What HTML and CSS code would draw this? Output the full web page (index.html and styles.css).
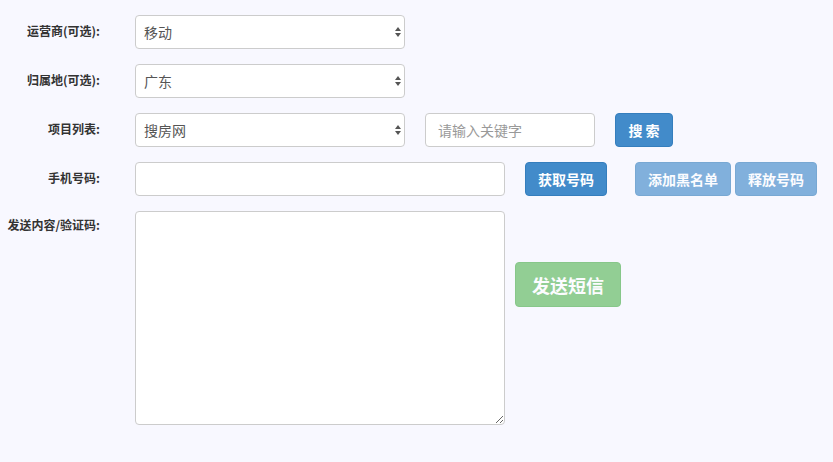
FILE: index.html
```html
<!DOCTYPE html>
<html lang="zh-CN">
<head>
    <meta charset="UTF-8">
    <title>短信验证码</title>
    <link rel="stylesheet" href="styles.css">
</head>
<body>
    <form class="sms-form">
        <div class="row">
            <label class="row-label">运营商(可选):</label>
            <span class="select-wrap">
                <select class="field select">
                    <option>移动</option>
                    <option>联通</option>
                    <option>电信</option>
                </select>
            </span>
        </div>

        <div class="row">
            <label class="row-label">归属地(可选):</label>
            <span class="select-wrap">
                <select class="field select">
                    <option>广东</option>
                </select>
            </span>
        </div>

        <div class="row">
            <label class="row-label">项目列表:</label>
            <span class="select-wrap">
                <select class="field select">
                    <option>搜房网</option>
                </select>
            </span>
            <input type="text" class="field keyword" placeholder="请输入关键字">
            <button type="button" class="btn btn-primary btn-search">搜 索</button>
        </div>

        <div class="row">
            <label class="row-label">手机号码:</label>
            <input type="text" class="field phone">
            <button type="button" class="btn btn-primary btn-get">获取号码</button>
            <div class="btn-pair">
                <button type="button" class="btn btn-primary btn-off">添加黑名单</button>
                <button type="button" class="btn btn-primary btn-off">释放号码</button>
            </div>
        </div>

        <div class="row row-tall">
            <label class="row-label">发送内容/验证码:</label>
            <textarea class="field message"></textarea>
            <button type="button" class="btn btn-send">发送短信</button>
        </div>
    </form>
</body>
</html>
```

FILE: styles.css
```css
body {
    margin: 0;
    background-color: #f8f8ff;
    font-family: "Noto Sans CJK SC", "Noto Sans", sans-serif;
    color: #333;
}
.sms-form {
    padding-top: 15px;
}
.row {
    display: flex;
    align-items: center;
    height: 34px;
    margin-bottom: 15px;
}
.row-label {
    width: 100px;
    margin-right: 35px;
    padding-bottom: 3px;
    text-align: right;
    font-size: 12px;
    font-weight: bold;
    color: #333;
}
.field {
    box-sizing: border-box;
    height: 34px;
    padding: 6px 12px;
    font-family: inherit;
    font-size: 14px;
    color: #555;
    background-color: #fff;
    border: 1px solid #ccc;
    border-radius: 4px;
    outline: none;
}
.field::placeholder {
    color: #999;
}
.select-wrap {
    position: relative;
    display: inline-block;
}
.select-wrap::before,
.select-wrap::after {
    content: "";
    position: absolute;
    right: 4px;
    width: 0;
    height: 0;
    border-left: 3px solid transparent;
    border-right: 3px solid transparent;
    pointer-events: none;
}
.select-wrap::before {
    top: 12px;
    border-bottom: 4px solid #555;
}
.select-wrap::after {
    top: 18px;
    border-top: 4px solid #555;
}
.select {
    width: 270px;
    padding-left: 8px;
    -webkit-appearance: none;
    appearance: none;
}
.keyword {
    width: 170px;
    margin-left: 20px;
}
.phone {
    width: 370px;
}
.btn {
    box-sizing: border-box;
    height: 34px;
    padding: 0 6px;
    font-family: inherit;
    font-size: 14px;
    font-weight: bold;
    color: #fff;
    border: 1px solid transparent;
    border-radius: 4px;
    cursor: pointer;
}
.btn-primary {
    background-color: #428bca;
    border-color: #357ebd;
}
.btn-search {
    width: 58px;
    margin-left: 20px;
}
.btn-get {
    width: 82px;
    margin-left: 20px;
}
.btn-pair {
    display: flex;
    gap: 4px;
    margin-left: 28px;
}
.btn-off {
    opacity: .65;
    cursor: not-allowed;
}
.btn-off:first-child {
    width: 96px;
}
.btn-off:last-child {
    width: 82px;
}
.row-tall {
    height: auto;
    align-items: flex-start;
}
.row-tall .row-label {
    padding-top: 5px;
}
.message {
    width: 370px;
    height: 214px;
    resize: vertical;
}
.btn-send {
    width: 106px;
    height: 45px;
    margin-left: 10px;
    margin-top: 51px;
    font-size: 18px;
    background-color: #5cb85c;
    border-color: #4cae4c;
    opacity: .65;
}
```
